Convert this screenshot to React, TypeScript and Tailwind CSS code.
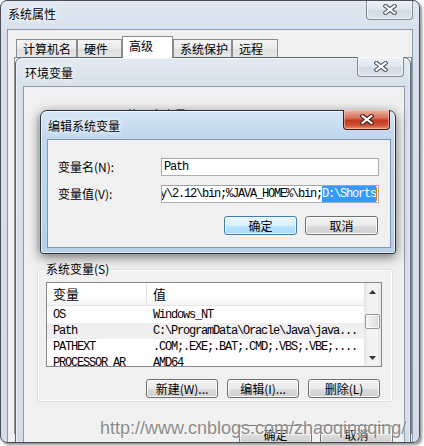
import React from 'react';

const MONO = "font-['Liberation_Mono','Noto_Sans_CJK_SC',monospace] text-[12px] tracking-[-1.2px]";
const GLOW = '[text-shadow:0_0_5px_#fff,0_0_8px_#fff]';

function CloseButton({ active, className }: { active?: boolean; className: string }) {
  return (
    <div
      className={`absolute flex h-[20px] w-[47px] items-center justify-center rounded-b-[4px] border border-t-0 ${
        active
          ? 'border-[#4a1a12] bg-[linear-gradient(180deg,#eab0a2_0%,#d9755e_40%,#c23b22_55%,#cc4f34_80%,#e4947a_100%)] shadow-[inset_0_0_0_1px_rgba(255,220,210,0.5)]'
          : 'border-[#7f8b98] bg-[linear-gradient(180deg,#eef3f8_0%,#dde6ef_50%,#d0dae5_51%,#dbe3ec_100%)] shadow-[inset_0_0_0_1px_rgba(255,255,255,0.6)]'
      } ${className}`}
    >
      <svg width="14" height="11" viewBox="0 0 14 11">
        <path d="M2.5 2 L11.5 9 M11.5 2 L2.5 9" stroke={active ? '#3b1c16' : '#4d5661'} strokeWidth="4.2" strokeLinecap="square" fill="none" />
        <path d="M2.5 2 L11.5 9 M11.5 2 L2.5 9" stroke="#fff" strokeWidth="2.2" strokeLinecap="square" fill="none" />
      </svg>
    </div>
  );
}

function Btn({ children, focused, w = 'w-[73px]' }: { children: React.ReactNode; focused?: boolean; w?: string }) {
  return (
    <div
      className={`flex h-[19px] ${w} items-center justify-center rounded-[3px] border leading-none ${
        focused
          ? 'border-[#3c7fb1] bg-[linear-gradient(180deg,#eaf6fd_0%,#d9f0fc_50%,#bee6fd_51%,#a7d9f5_100%)] shadow-[inset_0_0_0_1px_rgba(255,255,255,0.7)]'
          : 'border-[#707070] bg-[linear-gradient(180deg,#f2f2f2_0%,#ebebeb_50%,#dddddd_51%,#cfcfcf_100%)] shadow-[inset_0_0_0_1px_rgba(255,255,255,0.8)]'
      }`}
    >
      {children}
    </div>
  );
}

const tabs = [
  { label: '计算机名', w: 'w-[61px]' },
  { label: '硬件', w: 'w-[45px]' },
  { label: '高级', w: 'w-[51px]', active: true },
  { label: '系统保护', w: 'w-[59px]' },
  { label: '远程', w: 'w-[46px]' },
];

const rows = [
  { name: 'OS', value: 'Windows_NT' },
  { name: 'Path', value: 'C:\\ProgramData\\Oracle\\Java\\java...', hot: true },
  { name: 'PATHEXT', value: '.COM;.EXE;.BAT;.CMD;.VBS;.VBE;....' },
  { name: 'PROCESSOR_AR', value: 'AMD64' },
];

export default function App() {
  return (
    <div className="relative h-[446px] w-[424px] overflow-hidden bg-white font-['Noto_Sans_CJK_SC',sans-serif] text-[12px] text-black">
      <div className="absolute left-0 top-0 h-[443px] w-[420px] overflow-hidden rounded-[7px] bg-[linear-gradient(180deg,#e1e9f2_0%,#d7e1ec_30px,#d3dde9_100%)] shadow-[2px_2px_3px_rgba(0,0,0,0.45)]">
        {/* 系统属性 */}
        <div className={`absolute left-[8px] top-[5px] leading-[17px] ${GLOW}`}>系统属性</div>
        <CloseButton className="left-[366px] top-0" />
        <div className="absolute left-[7px] top-[29px] h-[430px] w-[406px] border border-[#8e9aa8] bg-[#f0f0f0]">
          <div className="flex h-[27px] items-end pl-[8px]">
            {tabs.map((t) => (
              <div
                key={t.label}
                className={`${t.w} border border-b-0 border-[#898c95] pl-[6px] leading-[16px] ${
                  t.active
                    ? 'relative z-10 -mb-[1px] h-[22px] bg-white pt-[1px]'
                    : 'h-[18px] bg-[linear-gradient(180deg,#f5f5f5_0%,#ebebeb_50%,#dedede_51%,#e6e6e6_100%)] pt-[1px]'
                }`}
              >
                {t.label}
              </div>
            ))}
          </div>
          <div className="ml-[6px] h-[377px] w-[398px] border border-[#898c95] bg-white" />
        </div>

        {/* 环境变量 */}
        <div className="absolute left-[15px] top-[57px] h-[400px] w-[396px] rounded-t-[7px] border border-[#5d6772] bg-[linear-gradient(180deg,#e3eaf2_0%,#d7e1ec_28px,#d3dde9_100%)] shadow-[inset_0_0_0_1px_rgba(255,255,255,0.55)]">
          <div className={`absolute left-[9px] top-[6px] leading-[17px] ${GLOW}`}>环境变量</div>
          <CloseButton className="left-[341px] top-[-1px]" />
          <div className="absolute left-[7px] top-[28px] h-[370px] w-[382px] border border-[#8e9aa8] bg-[#f0f0f0]">
            <div className="relative ml-[13px] mt-[28px] h-[136px] w-[356px] rounded-[3px] border border-[#d5dfe5]">
              <div className="absolute left-[8px] top-[-9px] whitespace-nowrap bg-[#f0f0f0] px-[1px] leading-[16px]">Administrator 的用户变量(U)</div>
            </div>
            <div className="relative ml-[13px] mt-[18px] w-[356px] rounded-[3px] border border-[#d5dfe5] pb-[3px] shadow-[inset_0_0_0_1px_#fff]">
              <div className="absolute left-[7px] top-[-9px] bg-[#f0f0f0] px-[1px] leading-[16px]">系统变量(S)</div>
              <div className="ml-[8px] mt-[12px] flex h-[85px] w-[336px] overflow-hidden border border-[#828790] bg-white">
                <div className="w-[317px]">
                  <div className="flex h-[23px] border-b border-[#e5e5e5] bg-[linear-gradient(180deg,#ffffff_0%,#ffffff_55%,#f4f5f7_100%)] leading-[22px]">
                    <div className="w-[100px] border-r border-[#e3e3e3] pl-[6px] text-[13px]">变量</div>
                    <div className="pl-[6px] text-[13px]">值</div>
                  </div>
                  <div className="pt-[1px]">
                    {rows.map((r) => (
                      <div key={r.name} className={`flex h-[16px] items-center ${MONO} ${r.hot ? 'bg-[#efefef]' : ''}`}>
                        <div className="w-[100px] pl-[6px]">{r.name}</div>
                        <div className="pl-[6px] whitespace-nowrap">{r.value}</div>
                      </div>
                    ))}
                  </div>
                </div>
                <div className="flex w-[17px] flex-col bg-[linear-gradient(90deg,#e4e4e4_0%,#f3f3f3_25%,#f3f3f3_75%,#e6e6e6_100%)]">
                  <div className="flex h-[17px] items-center justify-center">
                    <svg width="7" height="4" viewBox="0 0 7 4"><path d="M0 4 L3.5 0 L7 4 Z" fill="#333" /></svg>
                  </div>
                  <div className="ml-[1px] mt-[14px] h-[15px] w-[15px] rounded-[2px] border border-[#979797] bg-[linear-gradient(90deg,#f5f5f5_0%,#e9e9e9_50%,#d9d9d9_100%)] shadow-[inset_0_0_0_1px_rgba(255,255,255,0.8)]" />
                  <div className="flex-1" />
                  <div className="flex h-[17px] items-center justify-center">
                    <svg width="7" height="4" viewBox="0 0 7 4"><path d="M0 0 L7 0 L3.5 4 Z" fill="#333" /></svg>
                  </div>
                </div>
              </div>
              <div className="mt-[12px] flex justify-end gap-[9px] pr-[12px]">
                <Btn w="w-[72px]">新建(W)...</Btn>
                <Btn w="w-[72px]">编辑(I)...</Btn>
                <Btn w="w-[72px]">删除(L)</Btn>
              </div>
            </div>
            <div className="mt-[23px] flex justify-end gap-[8px] pr-[11px]">
              <Btn>确定</Btn>
              <Btn>取消</Btn>
            </div>
          </div>
        </div>

        {/* 编辑系统变量 */}
        <div className="absolute left-[40px] top-[110px] h-[144px] w-[356px] rounded-t-[7px] rounded-b-[3px] border border-[#2b3138] bg-[linear-gradient(180deg,#d6e6f6_0%,#c3d8ee_22px,#b7cfe9_100%)] shadow-[0_3px_12px_rgba(0,0,0,0.55),inset_0_0_0_1px_rgba(255,255,255,0.6)]">
          <div className={`absolute left-[7px] top-[6px] leading-[17px] ${GLOW}`}>编辑系统变量</div>
          <CloseButton active className="left-[302px] top-[-1px]" />
          <div className="absolute left-[6px] top-[28px] h-[109px] w-[344px] border border-[#8396ab] bg-[#f0f0f0] pl-[10px] pt-[18px]">
            <div className="flex h-[18px] items-center">
              <div className="w-[103px]">变量名(N):</div>
              <div className={`flex h-[18px] w-[218px] items-center border border-[#abadb3] border-t-[#9fa3ab] bg-white pl-[2px] ${MONO}`}>Path</div>
            </div>
            <div className="mt-[9px] flex h-[18px] items-center">
              <div className="w-[103px]">变量值(V):</div>
              <div className={`flex h-[18px] w-[218px] items-center justify-end overflow-hidden whitespace-nowrap border border-[#abadb3] border-t-[#9fa3ab] bg-white pr-[1px] ${MONO}`}>
                <span className="shrink-0">C:\Program Files\Ruby\2.12\bin;%JAVA_HOME%\bin;</span>
                <span className="shrink-0 bg-[#3399ff] text-white">D:\Shorts</span>
                <span className="h-[14px] w-[1px] shrink-0 bg-[#e07a1f]" />
              </div>
            </div>
            <div className="mt-[13px] flex justify-end gap-[8px] pr-[12px]">
              <Btn focused>确定</Btn>
              <Btn>取消</Btn>
            </div>
          </div>
        </div>

        {/* watermark */}
        <div className="absolute left-[100px] top-[419px] whitespace-nowrap font-['Liberation_Sans',Arial,sans-serif] text-[18px] leading-[18px] text-[#8b8b8b] [text-shadow:0_0_2px_#fff]">
          http://www.cnblogs.com/zhaoqingqing/
        </div>
      </div>
      <div className="pointer-events-none absolute left-0 top-0 h-[443px] w-[420px] rounded-[7px] border border-[#4b4f55]" />
    </div>
  );
}
